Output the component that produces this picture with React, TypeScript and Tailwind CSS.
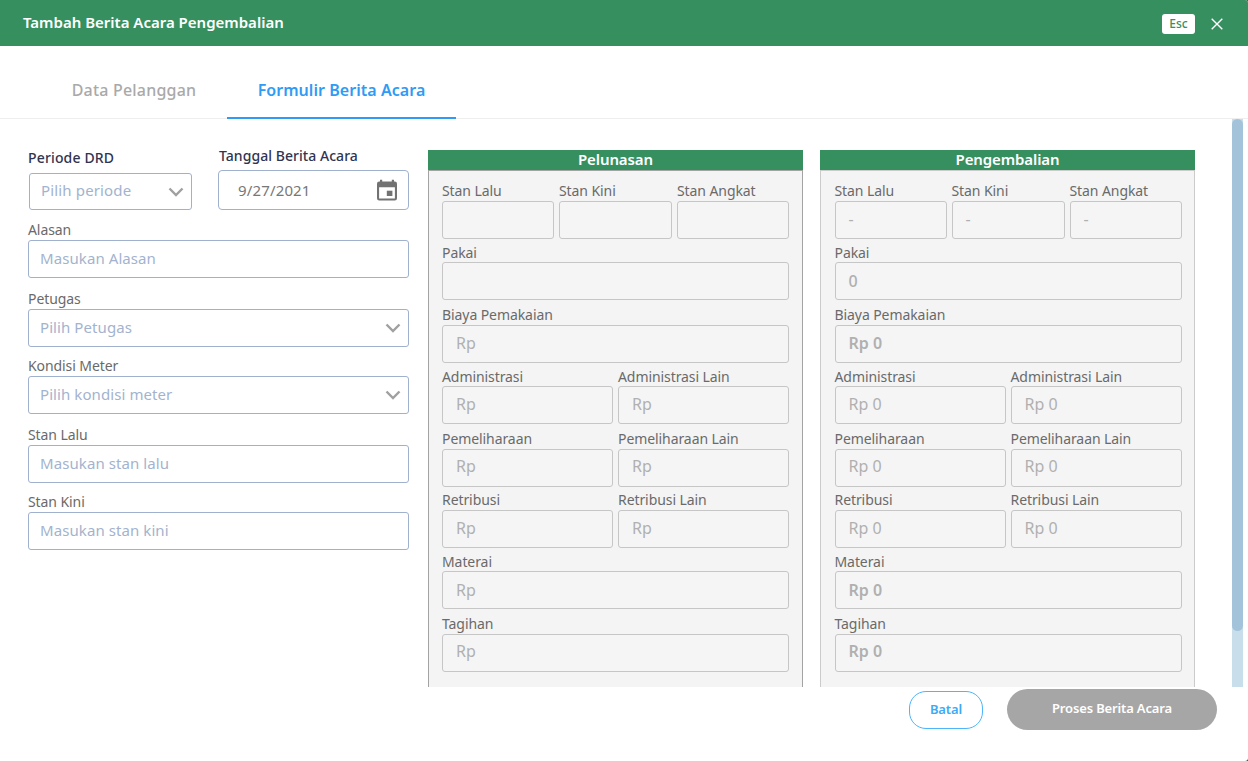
import type { ReactNode } from "react";

type FieldProps = {
  label: string;
  value?: string;
  row: string;
  width: string;
  labelClass?: string;
  boxClass?: string;
  valueClass?: string;
};

function Chevron() {
  return (
    <svg width="16" height="10" viewBox="0 0 16 10" fill="none" className="-mr-px shrink-0">
      <path d="M1.500 1.500 8 8l6.500-6.500" stroke="#a0a0a0" strokeWidth="2.4" />
    </svg>
  );
}

function ReadOnlyField({
  label,
  value,
  row,
  width,
  labelClass = "leading-5",
  boxClass = "pb-[2px]",
  valueClass = "",
}: FieldProps) {
  return (
    <div className={`flex flex-col justify-end ${row} ${width}`}>
      <span className={`h-5 whitespace-nowrap text-[14px] tracking-[-0.08px] text-[#6a6a6a] ${labelClass}`}>{label}</span>
      <div className={`flex h-[38px] items-center rounded-[3px] border border-[#c6c6c6] bg-[#f5f5f5] pl-[13px] ${boxClass}`}>
        <span className={`text-[16px] leading-5 text-[#b0b0b0] ${valueClass}`}>{value}</span>
      </div>
    </div>
  );
}

type PanelProps = {
  title: string;
  frame: string;
  dash: string;
  usage: string;
  amount: string;
  strong: string;
};

function Panel({ title, frame, dash, usage, amount, strong }: PanelProps) {
  return (
    <section className="flex h-[537px] w-[375px] shrink-0 flex-col">
      <h2 className="h-5 bg-[#368f5f] text-center text-[15px] leading-[18px] font-semibold tracking-[-0.1px] text-white">
        {title}
      </h2>
      <div className={`flex-1 border-x border-t bg-[#f4f4f4] ${frame}`}>
        <div className="flex gap-[5px]">
          <ReadOnlyField label="Stan Lalu" value={dash} row="h-[68px]" width="w-[112px]" />
          <ReadOnlyField label="Stan Kini" value={dash} row="h-[68px]" width="w-[113px]" />
          <ReadOnlyField label="Stan Angkat" value={dash} row="h-[68px]" width="w-[112px]" />
        </div>
        <ReadOnlyField
          label="Pakai"
          value={usage}
          row="h-[61px]"
          width="w-[347px]"
          labelClass="leading-[22px]"
          boxClass="pb-0"
          valueClass="font-medium"
        />
        <ReadOnlyField label="Biaya Pemakaian" value={amount} row="h-[63px]" width="w-[347px]" valueClass={strong} />
        <div className="flex gap-[5px]">
          <ReadOnlyField label="Administrasi" value={amount} row="h-[61px]" width="w-[171px]" labelClass="leading-[22px]" />
          <ReadOnlyField label="Administrasi Lain" value={amount} row="h-[61px]" width="w-[171px]" labelClass="leading-[22px]" />
        </div>
        <div className="flex gap-[5px]">
          <ReadOnlyField label="Pemeliharaan" value={amount} row="h-[63px]" width="w-[171px]" boxClass="pb-[4px]" />
          <ReadOnlyField label="Pemeliharaan Lain" value={amount} row="h-[63px]" width="w-[171px]" boxClass="pb-[4px]" />
        </div>
        <div className="flex gap-[5px]">
          <ReadOnlyField label="Retribusi" value={amount} row="h-[61px]" width="w-[171px]" />
          <ReadOnlyField label="Retribusi Lain" value={amount} row="h-[61px]" width="w-[171px]" />
        </div>
        <ReadOnlyField
          label="Materai"
          value={amount}
          row="h-[61px]"
          width="w-[347px]"
          labelClass="leading-[22px]"
          boxClass="pb-0"
          valueClass={strong}
        />
        <ReadOnlyField label="Tagihan" value={amount} row="h-[63px]" width="w-[347px]" boxClass="pb-[4px]" valueClass={strong} />
      </div>
    </section>
  );
}

function InputField({ label, placeholder, row, children }: { label: string; placeholder: string; row: string; children?: ReactNode }) {
  return (
    <div className={`flex flex-col justify-end ${row}`}>
      <span className="h-[19px] text-[14px] leading-[18px] tracking-[-0.08px] text-[#6a6a6a]">{label}</span>
      <div className="flex h-[38px] w-[381px] items-center justify-between rounded-[3px] border border-[#9fb1cd] bg-white pr-2 pl-[11px]">
        <span className="pb-[3px] text-[15px] leading-5 tracking-[0.08px] text-[#a3b3ce]">{placeholder}</span>
        {children}
      </div>
    </div>
  );
}

export default function App() {
  return (
    <div className="h-[761px] w-[1248px] overflow-hidden bg-[#444] font-['Noto_Sans',sans-serif]">
      <div className="flex h-full flex-col overflow-hidden rounded-r-[3px] bg-white">
        <header className="flex h-[46px] shrink-0 items-center bg-[#368f5f] pr-[25px] pl-[23px]">
          <h1 className="pb-px text-[15px] font-semibold text-white">Tambah Berita Acara Pengembalian</h1>
          <span className="mt-px ml-auto flex h-5 w-[33px] items-center justify-center rounded-[3px] bg-white text-[12px] font-medium text-[#368f5f]">
            Esc
          </span>
          <svg width="12" height="12" viewBox="0 0 12 12" className="mt-px ml-4" fill="none">
            <path d="M.7.7l10.600 10.600M11.300.7.7 11.300" stroke="#fff" strokeWidth="1.4" />
          </svg>
        </header>
        <nav className="flex h-[73px] shrink-0 border-b border-[#eeeeee] pl-[41px] text-[16px]">
          <span className="flex h-[72px] w-[186px] items-center justify-center pt-[16px] font-medium tracking-[0.2px] text-[#a9a9a9]">
            Data Pelanggan
          </span>
          <span className="flex h-[73px] w-[229px] items-center justify-center border-b-2 border-[#2f9bf4] pt-[17px] pb-px font-semibold tracking-[0.05px] text-[#2f9bf4]">
            Formulir Berita Acara
          </span>
        </nav>
        <main className="flex h-[568px] shrink-0 pl-7">
          <div className="w-[400px] shrink-0">
            <div className="flex h-[91px]">
              <div className="w-[190px] pt-[29px]">
                <div className="h-[25px] text-[14px] leading-5 font-medium tracking-[0.15px] text-[#2f3450]">Periode DRD</div>
                <div className="ml-px flex h-[37px] w-[163px] items-center justify-between rounded-[3px] border border-[#9fb1cd] pr-2 pl-[11px]">
                  <span className="pb-[3px] text-[15px] leading-5 tracking-[0.15px] text-[#a3b3ce]">Pilih periode</span>
                  <Chevron />
                </div>
              </div>
              <div className="pt-[27px]">
                <div className="h-6 pl-px text-[14px] leading-5 font-medium tracking-[0.05px] text-[#2f3450]">Tanggal Berita Acara</div>
                <div className="flex h-10 w-[191px] items-center justify-between rounded-[4px] border border-[#9fb1cd] pr-[11px] pl-[19px]">
                  <span className="text-[15px] tracking-[0.15px] text-[#777777]">9/27/2021</span>
                  <svg width="20" height="22" viewBox="0 0 20 22" className="mb-px">
                    <path
                      fill="#727272"
                      fillRule="evenodd"
                      d="M3 2.500V.7h2.200v1.800h9.600V.7H17v1.800h.8A2.200 2.200 0 0 1 20 4.700v14.600a2.200 2.200 0 0 1-2.200 2.200H2.200A2.200 2.200 0 0 1 0 19.300V4.700a2.200 2.200 0 0 1 2.200-2.200zM2.100 8.200v11.200h15.800V8.200z"
                    />
                    <path fill="#727272" d="M9.800 11.700h5.600V17H9.800z" />
                  </svg>
                </div>
              </div>
            </div>
            <InputField label="Alasan" placeholder="Masukan Alasan" row="h-[68px]" />
            <InputField label="Petugas" placeholder="Pilih Petugas" row="h-[69px]">
              <Chevron />
            </InputField>
            <InputField label="Kondisi Meter" placeholder="Pilih kondisi meter" row="h-[67px]">
              <Chevron />
            </InputField>
            <InputField label="Stan Lalu" placeholder="Masukan stan lalu" row="h-[69px]" />
            <InputField label="Stan Kini" placeholder="Masukan stan kini" row="h-[67px]" />
          </div>
          <div className="flex gap-[17px] pt-[31px]">
            <Panel title="Pelunasan" frame="border-[#a3a3a3] px-[13px]" dash="" usage="" amount="Rp" strong="" />
            <Panel title="Pengembalian" frame="border-[#cbcbcb] pr-3 pl-[13.500px]" dash="-" usage="0" amount="Rp 0" strong="font-semibold" />
          </div>
          <div className="mr-[5px] ml-auto w-[11px] bg-[#c8dfeb]">
            <div className="h-[512px] rounded-full bg-[#a3c3da]" />
          </div>
        </main>
        <footer className="flex flex-1 items-start justify-end gap-[24px] pt-[2px] pr-[31px]">
          <button className="mt-[2px] h-[38px] w-[74px] rounded-[17px] border border-[#4db5fa] bg-white text-[13px] font-semibold tracking-[-0.1px] text-[#3eaaf6]">
            Batal
          </button>
          <button className="h-[41px] w-[210px] rounded-full bg-[#a6a6a6] pb-px text-[13px] font-semibold tracking-[-0.15px] text-white">
            Proses Berita Acara
          </button>
        </footer>
      </div>
    </div>
  );
}
